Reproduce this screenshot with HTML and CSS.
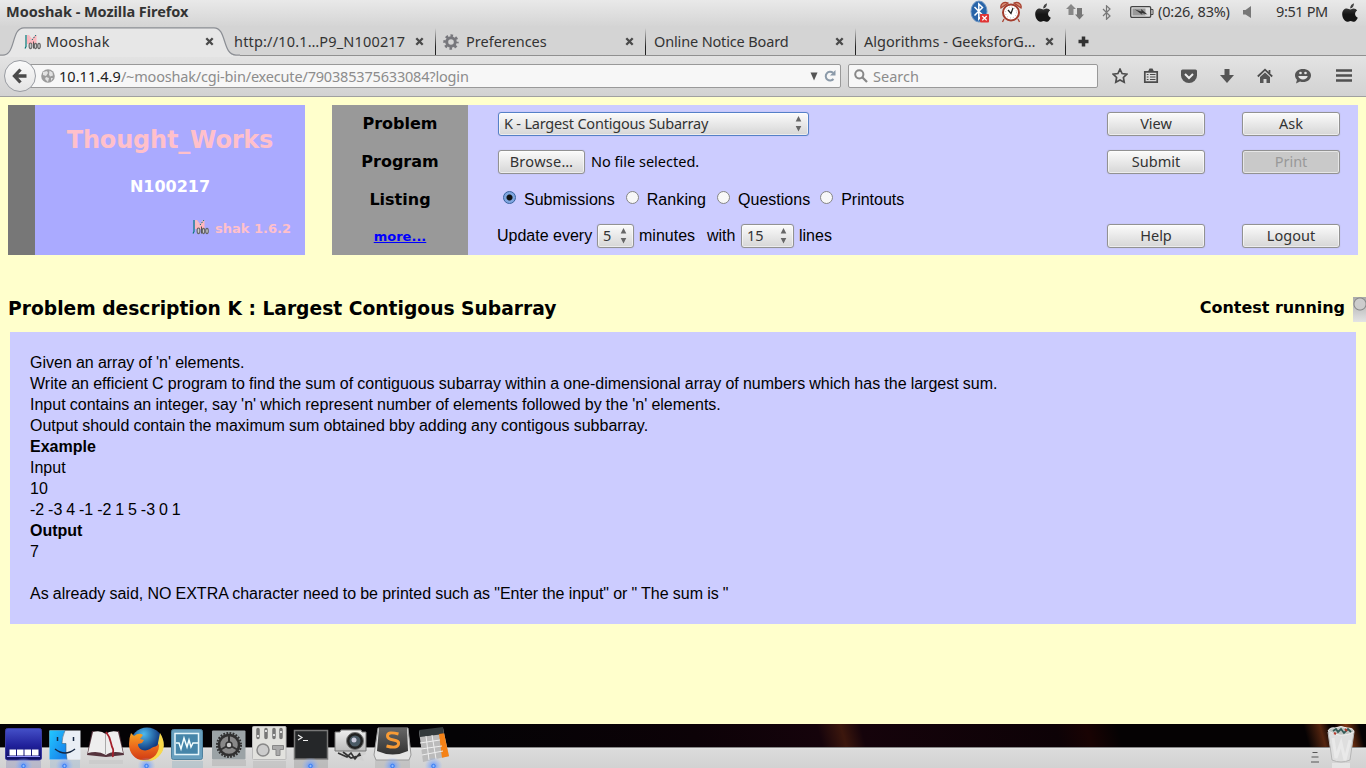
FILE: index.html
```html
<!DOCTYPE html>
<html lang="en">
<head>
<meta charset="utf-8">
<title>Mooshak</title>
<link rel="stylesheet" href="styles.css">
</head>
<body>
<svg class="defs" width="0" height="0">
  <defs>
    <linearGradient id="apple-fill" x2="0" y2="1"><stop stop-color="#555"/><stop offset=".6" stop-color="#151515"/></linearGradient>
    <linearGradient id="glass" x2="0" y2="1"><stop stop-color="#666"/><stop offset="1" stop-color="#333"/></linearGradient>
    <linearGradient id="silver" x2="0" y2="1"><stop stop-color="#eee"/><stop offset="1" stop-color="#bbb"/></linearGradient>
    <linearGradient id="navy" x2="0" y2="1"><stop stop-color="#4450c8"/><stop offset=".55" stop-color="#20209a"/><stop offset="1" stop-color="#101060"/></linearGradient>
    <linearGradient id="sky" x2="1" y2="1"><stop stop-color="#22c8ff"/><stop offset="1" stop-color="#1677e8"/></linearGradient>
    <linearGradient id="fox" x2="0" y2="1"><stop stop-color="#f5a623"/><stop offset=".5" stop-color="#ec6a1c"/><stop offset="1" stop-color="#cf3a14"/></linearGradient>
    <radialGradient id="globe-fill" cx=".4" cy=".2"><stop stop-color="#4db9ee"/><stop offset="1" stop-color="#123a80"/></radialGradient>
    <radialGradient id="glow"><stop stop-color="#4d8dff"/><stop offset=".4" stop-color="#6f9fff" stop-opacity=".55"/><stop offset="1" stop-color="#8fb4ff" stop-opacity="0"/></radialGradient>
    <symbol id="apple" viewBox="0 0 16 19"><path d="M8.2 5.6C8 2.800 9.800.8 12 .2c.2 2.500-1.400 4.900-3.800 5.400zM11.500 5.500c1.700 0 3 .8 3.600 2-3 2-2.500 5.800.7 7.200-.9 2.300-2.400 4-3.800 4-1.300 0-1.800-.8-3.400-.8-1.500 0-2 .8-3.300.8C2.700 18.700.2 14.700.2 11.200c0-3.600 2.200-5.600 4.500-5.600 1.600 0 2.500.9 3.700.9 1.100 0 1.700-1 3.100-1z" fill="url(#apple-fill)"/></symbol>
    <symbol id="close" viewBox="0 0 9 9"><path d="M1.300 1.300l6.400 6.400M7.700 1.300L1.300 7.700" stroke="#4a4a4a" stroke-width="2.300"/></symbol>
    <symbol id="moo" viewBox="0 0 17 16"><path d="M3 1h2l3 4 3-4h1.500v9H3z" fill="#ffb6bd"/><path d="M2 1v11.500L1 14.500" stroke="#087878" fill="none" stroke-width="1.200"/><path d="M4 1.500l3.500 6" stroke="#e3c9cd" fill="none"/><path d="M8 6l4-5" stroke="#087878" stroke-dasharray="1.500 1"/><path d="M9.500 7.500v7" stroke="#555"/><g fill="#ccc" stroke="#666" stroke-width="1.100"><ellipse cx="6.500" cy="11.800" rx="1.400" ry="2.800"/><ellipse cx="11.500" cy="12" rx="1.200" ry="2.600"/><ellipse cx="15" cy="12" rx="1.300" ry="2.600"/></g></symbol>
    <symbol id="gear" viewBox="-8 -8 16 16"><g fill="none"><circle r="4.300" stroke="currentColor" stroke-width="3"/><circle r="6.400" stroke="currentColor" stroke-width="2.600" stroke-dasharray="2.600 2.427" stroke-dashoffset="1.300"/></g></symbol>
    <symbol id="updown" viewBox="0 0 7 17"><path d="M3.500 1L6.300 6.500H.7zM3.500 16.500L.7 11h5.600z" fill="#666"/></symbol>
    <symbol id="lit" viewBox="0 0 20 12"><circle cx="10" cy="8" r="9" fill="url(#glow)"/><circle cx="10" cy="8" r="1.700" fill="#8fbcff" stroke="#3679f0"/></symbol>
  </defs>
</svg>

<header class="titlebar">
  <div class="window-title">Mooshak - Mozilla Firefox</div>
  <div class="indicators">
    <svg class="i-bt" viewBox="0 0 20 24"><ellipse cx="9" cy="11.500" rx="8" ry="10.500" fill="#2864a8" stroke="#6b95c4"/><path d="M4.500 7l8 8-3.700 4V4l3.700 3.500-8 8" fill="none" stroke="#fff" stroke-width="1.500"/><rect x="10" y="14" width="9" height="8.500" rx="1" fill="#e03434"/><path d="M12.300 16l4.400 4.400m0-4.400l-4.400 4.400" stroke="#fff" stroke-width="1.300"/></svg>
    <svg class="i-alarm" viewBox="0 0 22 22"><path d="M1 7C0 3 4 0 8 2zM21 7c1-4-3-7-7-5zM4 18l-1.500 3M18 18l1.500 3" fill="#d99078" stroke="#a84332" stroke-width="1.300"/><circle cx="11" cy="11.500" r="8" fill="#fff" stroke="#a33c2c" stroke-width="2"/><circle cx="11" cy="11.500" r="5.500" fill="none" stroke="#999" stroke-dasharray=".7 2.180"/><path d="M8 9l3 3.500L13 7" fill="none" stroke="#222" stroke-width="1.300"/></svg>
    <svg class="i-apple"><use href="#apple"/></svg>
    <svg class="i-net" viewBox="0 0 18 16"><path d="M5 0l5 5H7.500v6h-5V5H0z" fill="#888"/><path d="M13.500 15.500l4.500-5h-2V4h-5v6.500H9z" fill="#777"/></svg>
    <svg class="i-bt2" viewBox="0 0 9 15"><path d="M1 4l7 7-3.500 3.300V.8L8 4l-7 7" fill="none" stroke="#777" stroke-width="1.200"/></svg>
    <svg class="i-bat" viewBox="0 0 24 12"><rect x=".7" y=".7" width="20" height="10.600" rx="1.300" fill="none" stroke="#444" stroke-width="1.300"/><path d="M21 3.500h2v5h-2" fill="none" stroke="#444"/><path d="M2.500 2.500h13v7h-13z" fill="#999"/><path d="M5 3.500l6.500 2L11 3l6.500 5.500-6-1.500 1 2z" fill="#333"/></svg>
    <span class="battery-text">(0:26, 83%)</span>
    <svg class="i-vol" viewBox="0 0 9 12"><path d="M0 4h2.500L8 0v12L2.500 8.500H0z" fill="#777"/></svg>
    <span class="clock">9:51 PM</span>
    <svg class="i-apple last"><use href="#apple"/></svg>
  </div>
</header>

<nav class="tabs">
  <svg class="tab-shape" viewBox="0 0 240 30"><path d="M0 28.500H3C16 28.500 11 1 24 1H214C227 1 222 28.500 236 28.500H240V30H0z" fill="#e7e7e7"/><path d="M0 28H3C16 28 11 .8 24 .8H214C227 .8 222 28 236 28H240" fill="none" stroke="#8b8e94" stroke-width="1.200"/></svg>
  <div class="tab active"><svg class="fav"><use href="#moo"/></svg><span class="t1">Mooshak</span><svg class="x"><use href="#close"/></svg></div>
  <div class="tab"><span class="t2">http://10.1…P9_N100217</span><svg class="x"><use href="#close"/></svg></div>
  <div class="tab"><svg class="fav gear"><use href="#gear"/></svg><span class="t3">Preferences</span><svg class="x"><use href="#close"/></svg></div>
  <div class="tab"><span class="t4">Online Notice Board</span><svg class="x"><use href="#close"/></svg></div>
  <div class="tab"><span class="t5">Algorithms - GeeksforG…</span><svg class="x"><use href="#close"/></svg></div>
  <svg class="plus" viewBox="0 0 11 11"><path d="M5.500.5v10M.5 5.500h10" stroke="#333" stroke-width="3.500"/></svg>
</nav>

<div class="toolbar">
  <div class="back"><svg viewBox="0 0 16 16" width="16" height="16"><path d="M8.500 1.500L2.500 8l6 6.500M3 8h11.500" fill="none" stroke="#4a4a4a" stroke-width="3.300"/></svg></div>
  <div class="url">
    <svg class="world" viewBox="0 0 14 14"><circle cx="7" cy="7" r="6.800" fill="#9b9b9b"/><path d="M2 3l4-1 1 2-2 3-3-1zM8.500 1.500l3 2 .5 3-3 1-1-2zM5 8l3 1-1 4-3-3zM10 9l2 0-2 3z" fill="#e2e2e2"/></svg>
    <span class="address"><b>10.11.4.9</b>/~mooshak/cgi-bin/execute/790385375633084?login</span>
    <svg class="drop" viewBox="0 0 8 9"><path d="M.5.5h7L4 8.500z" fill="#555"/></svg>
    <svg class="reload" viewBox="0 0 12 12"><path d="M9.500 9A4.400 4.400 0 1 1 9 2.800" fill="none" stroke="#8b9aa9" stroke-width="2"/><path d="M11.500 0v5.500H6z" fill="#8b9aa9"/></svg>
  </div>
  <div class="search"><svg viewBox="0 0 14 14" width="14" height="14"><circle cx="5.300" cy="5.300" r="4.100" fill="none" stroke="#888" stroke-width="2"/><path d="M8.500 8.500l4.500 4.500" stroke="#888" stroke-width="2.300"/></svg><span>Search</span></div>
  <div class="tools">
    <svg viewBox="0 0 16 16"><path d="M8 1.200l2.100 4.300 4.700.7-3.400 3.300.8 4.700L8 12l-4.200 2.200.8-4.700L1.200 6.200l4.700-.7z" fill="none" stroke="#4c4c4c" stroke-width="1.700"/></svg>
    <i class="thin"></i>
    <svg class="clip" viewBox="0 0 16 16"><path d="M1.800 3.800h12.400v10.400H1.800z" fill="none" stroke="#4c4c4c" stroke-width="1.700"/><path d="M5 3.500l1.500-3h3l1.500 3z" fill="#4c4c4c"/><path d="M3.800 6.500h1.700m1.500 0h5.500M3.800 9h1.700M7 9h5.500M3.800 11.500h1.700m1.500 0h5.500" stroke="#4c4c4c" stroke-width="1.200"/></svg>
    <svg viewBox="0 0 16 16"><path d="M0 3Q0 1.500 1.500 1.500h13Q16 1.500 16 3v4.500a8 7.500 0 0 1-16 0z" fill="#555"/><path d="M4 6l4 4 4-4" fill="none" stroke="#eee" stroke-width="2"/></svg>
    <svg viewBox="0 0 16 16"><path d="M5.500 1h5v6H15l-7 8-7-8h4.500z" fill="#555"/></svg>
    <svg viewBox="0 0 16 16"><path d="M.8 8.500L8 1.700l7.200 6.800M12.500 2v3" fill="none" stroke="#4c4c4c" stroke-width="1.800"/><path d="M3 9l5-4.500L13 9v6H9.500v-4h-3v4H3z" fill="#555"/></svg>
    <svg viewBox="0 0 16 16"><path d="M8 1c4.500 0 8 2.700 8 6.400s-3.500 6.600-8 6.600q-1.500 0-3-.5L1 15.500l1-3.700C1 10.700 0 9.300 0 7.400 0 3.700 3.500 1 8 1z" fill="#555"/><path d="M3.300 8h9.400c-.5 4.500-8.900 4.500-9.400 0z" fill="#e5e5e5"/><circle cx="5.500" cy="5" r="1.300" fill="#e5e5e5"/><circle cx="10.500" cy="5" r="1.300" fill="#e5e5e5"/></svg>
    <i class="tall"></i>
    <svg viewBox="0 0 16 16"><path d="M0 2.500h16M0 7.500h16M0 12.500h16" stroke="#505050" stroke-width="2.600"/></svg>
  </div>
</div>

<main class="page">
  <section class="top">
    <div class="team">
      <h1>Thought_Works</h1>
      <h2>N100217</h2>
      <div class="brand"><svg><use href="#moo"/></svg>shak 1.6.2</div>
    </div>
    <div class="labels"><span>Problem</span><span>Program</span><span>Listing</span><a href="#">more...</a></div>
    <div class="form">
      <div class="row"><div class="controls"><div class="btn select wide"><span>K - Largest Contigous Subarray</span><svg><use href="#updown"/></svg></div></div><div class="btn action">View</div><div class="btn action">Ask</div></div>
      <div class="row"><div class="controls"><div class="btn browse">Browse…</div><span class="nofile">No file selected.</span></div><div class="btn action">Submit</div><div class="btn action disabled">Print</div></div>
      <div class="row radios"><i class="radio on"></i><span class="r1">Submissions</span><i class="radio"></i><span class="r2">Ranking</span><i class="radio"></i><span class="r3">Questions</span><i class="radio"></i><span>Printouts</span></div>
      <div class="row"><div class="controls update"><span class="u1">Update every</span><div class="btn select s5"><span>5</span><svg><use href="#updown"/></svg></div><span class="u2">minutes</span><span class="u3">with</span><div class="btn select s15"><span>15</span><svg><use href="#updown"/></svg></div><span>lines</span></div><div class="btn action">Help</div><div class="btn action">Logout</div></div>
    </div>
  </section>
  <section class="heading"><h3>Problem description K : Largest Contigous Subarray</h3><div class="status">Contest running</div><i class="scroll"></i></section>
  <article class="problem">Given an array of 'n' elements.<br>Write an efficient C program to find the sum of contiguous subarray within a one-dimensional array of numbers which has the largest sum.<br>Input contains an integer, say 'n' which represent number of elements followed by the 'n' elements.<br>Output should contain the maximum sum obtained bby adding any contigous subbarray.<br><b>Example</b><br>Input<br>10<br><span class="sample">-2 -3 4 -1 -2 1 5 -3 0 1</span><br><b>Output</b><br>7<br><br>As already said, NO EXTRA character need to be printed such as "Enter the input" or " The sum is "</article>
</main>

<footer class="dock">
  <svg viewBox="0 0 41 44"><path d="M3 37h35v7H3z" fill="#8888b8" opacity=".35"/><rect x="2.500" y="4.500" width="36" height="31.500" rx="2" fill="url(#navy)" stroke="#3b3b9e"/><path d="M6.500 25.500h6.500v6H6.500zm7.500 0h6.500v6H14zm7.500 0H28v6h-6.500zm7.500 0h6.500v6H29z" fill="#fff"/><path d="M4 32.500h33" stroke="#99f"/><use href="#lit" x="10.500" y="34" width="20" height="12"/></svg>
  <svg viewBox="0 0 41 44"><path d="M6 36h30v8H6z" fill="#9dbbd5" opacity=".4"/><path d="M5.500 6.500h31v29h-31z" fill="#e9eef5"/><path d="M5.500 6.500H21q-3.500 7-3 13h4q-.5 9 1 16H5.500z" fill="url(#sky)"/><path d="M21 6.500q-3 7-3 13h4q-.5 9 1 16" fill="none" stroke="#38617e" stroke-width=".6"/><path d="M13.500 13v4M29.500 13v4M11 25q10 8 20 0" fill="none" stroke="#152640" stroke-width="1.500"/><use href="#lit" x="10.500" y="34" width="20" height="12"/></svg>
  <svg viewBox="0 0 41 44"><path d="M2 31L7 7l13 2 14-2 5 24-18 2z" fill="#55343d"/><path d="M3 29L8 8q8-2 12.500 2Q26 6 33 8l5 21q-11-3-17 2-8-5-18-2z" fill="#eee"/><path d="M20.500 10v20" stroke="#aaa"/><path d="M21 8c6 7 4 12 7 17 1 3-1 5 0 8" fill="none" stroke="#a5202b" stroke-width="1.800"/><path d="M4 36h34v4H4z" fill="#bbb" opacity=".3"/></svg>
  <svg viewBox="0 0 41 44"><circle cx="21" cy="20" r="16.500" fill="url(#globe-fill)"/><path d="M34 9c5 8 6 17-2 24-5 5-14 6-20 2 12 1 20-6 20-16z" fill="#f9d94a"/><path d="M5 9l3 3q5-4 9-1l-3 4 4 1-2 3-4 1c0 6 7 8 12 5 4-3 8-2 9-6 1 9-5 17-14 17C10 37 3 30 3 20q0-6 2-11z" fill="url(#fox)"/><use href="#lit" x="10.500" y="34" width="20" height="12"/></svg>
  <svg viewBox="0 0 41 44"><path d="M5 37h31v7H5z" fill="#80a8bd" opacity=".3"/><rect x="4.500" y="5.500" width="31" height="30" rx="2" fill="#689fbe" stroke="#4e819e"/><path d="M8 9.500h23.500v21H8z" fill="#4585a9" stroke="#e5f5fa" stroke-width="1.500"/><path d="M9 19h3l2 6 3-11 3 9 2-7 2 7 2-4h5" fill="none" stroke="#f4ffff" stroke-width="1.500"/></svg>
  <svg viewBox="0 0 41 44"><path d="M4 36h34v6H4z" fill="#999" opacity=".3"/><rect x="4" y="6.500" width="33.500" height="29" rx="1" fill="#9ba3a6"/><circle cx="21" cy="21" r="10" fill="#888" stroke="#303030" stroke-width="2.500"/><circle cx="21" cy="21" r="12" fill="none" stroke="#303030" stroke-width="2" stroke-dasharray="1.800 1.350"/><path d="M21 21V11M21 21l9 5M21 21l-9 5" stroke="#333" stroke-width="2"/><circle cx="21" cy="21" r="3" fill="#ccc" stroke="#333" stroke-width="1.500"/></svg>
  <svg viewBox="0 0 41 44"><path d="M4 37h33v7H4z" fill="#aaa" opacity=".3"/><rect x="3.500" y="2.500" width="33.500" height="33" rx="1" fill="#e2e2de" stroke="#bbb"/><path d="M9 5.500v8M17 5.500v8M25 5.500v8M32 5.500v8" stroke="#777" stroke-width="3.500" stroke-linecap="round"/><path d="M9 11v2M17 6v2M25 10v2M32 7v2" stroke="#ddd" stroke-width="2"/><circle cx="14" cy="26" r="6" fill="#ccc" stroke="#888" stroke-width="1.500"/><path d="M23.500 21.500h11v4h-3.500v6h-4v-6h-3.500z" fill="#aaa" stroke="#888"/></svg>
  <svg viewBox="0 0 41 44"><path d="M4 36h34v8H4z" fill="#999" opacity=".4"/><rect x="4.500" y="6.500" width="33" height="28.500" fill="#252729" stroke="#777" stroke-width="1.500"/><path d="M8 11l4 2.500L8 16M13 16.500h5" fill="none" stroke="#eee" stroke-width="1.200"/><use href="#lit" x="10.500" y="34" width="20" height="12"/></svg>
  <svg viewBox="0 0 41 44"><path d="M5 26h28l2 4-4 2 2 5-9-2-4 2-5-3-6 2 2-4z" fill="#d0d0d0"/><path d="M7 29l9 4 4-4 4 6 5-6M12 28l8 6 10-3" fill="none" stroke="#333" stroke-width="1.600"/><path d="M4 8h5l1-2h20l1 2h4v19H4z" fill="url(#silver)" stroke="#777"/><circle cx="24" cy="17" r="8.500" fill="#222" stroke="#777"/><circle cx="24" cy="17" r="5.500" fill="#4a5a65"/><circle cx="23" cy="16" r="2.500" fill="#ccd"/></svg>
  <svg viewBox="0 0 41 44"><path d="M3 36h35v8H3z" fill="#aaa" opacity=".4"/><path d="M6 4h30l3 27-2 5H4l-2-5z" fill="#e5e5e5" stroke="#999"/><path d="M7 4h28l1 23q-15 7-31 0z" fill="url(#glass)"/><path d="M26.500 10q-11-3-11 2 0 3 6 4t5 4q-1 5-12 2" fill="none" stroke="#f89b35" stroke-width="3"/><use href="#lit" x="10.500" y="34" width="20" height="12"/></svg>
  <svg viewBox="0 0 41 44"><path d="M6 7l24-3 6 28-26 6z" fill="#bbb"/><path d="M6 6l24-3 1 7-24 3z" fill="#333a3c"/><path d="M26 10l5-.7 5 23-7 1.500z" fill="#f58216"/><path d="M7 19l20-3M8 25l21-3M9 31l21-4M13 12l3 24M19 11l4 24" stroke="#eee" stroke-width="1"/><use href="#lit" x="10.500" y="34" width="20" height="12"/></svg>
  <svg class="dock-menu" viewBox="0 0 8 12"><path d="M1.500 1.500h5M.5 6h7M0 11h8" stroke="#555"/></svg>
  <svg class="trash" viewBox="0 0 41 44"><path d="M11 39h18v5H11z" fill="#fff" opacity=".4"/><path d="M7 8h26l-4 28q-9 4-18 0z" fill="#dedede" stroke="#b5b5b5"/><path d="M12 14l3 20 5-15 4 17 5-20" fill="none" stroke="#e9e9e9" stroke-width="3"/><path d="M7 7q2-4 7-3 6-3 12 0 7 0 7 4-13 7-26-1z" fill="#c3c6c3" stroke="#eee"/><path d="M12 7l3-2 2 3 3-3 3 4 4-4 3 3" fill="none" stroke="#345b58" stroke-width="1.800"/><path d="M24 5l2 2M13 9l2 1" stroke="#b43b2c" stroke-width="2"/></svg>
</footer>
</body>
</html>
```
FILE: styles.css
```css
* { box-sizing: border-box; }
body { margin: 0; width: 1366px; height: 768px; overflow: hidden; display: flex; flex-direction: column; background: #ffffcc; font: 16px "Liberation Sans", sans-serif; color: #000; }
svg { display: block; flex: none; }
.defs { position: absolute; }
.titlebar, .tabs, .toolbar, .btn, .nofile { font-family: "Noto Sans", sans-serif; font-size: 14.500px; color: #333; white-space: nowrap; }

.titlebar { height: 26px; display: flex; justify-content: space-between; align-items: center; background: linear-gradient(#e9e9e9, #d5d5d5); padding-bottom: 2px; }
.window-title { padding: 0 0 2px 6px; font-size: 14.500px; font-weight: bold; letter-spacing: -.04px; }
.indicators { display: flex; align-items: center; width: 396px; }
.i-bt { width: 20px; height: 24px; }
.i-alarm { width: 22px; height: 22px; margin-left: 10px; }
.i-apple { width: 16px; height: 19px; margin-left: 13px; }
.i-net { width: 18px; height: 16px; margin-left: 15px; }
.i-bt2 { width: 9px; height: 15px; margin-left: 18px; }
.i-bat { width: 24px; height: 12px; margin-left: 19px; }
.battery-text { width: 86px; padding: 0 0 2px 4px; letter-spacing: -.18px; }
.i-vol { width: 9px; height: 12px; margin-left: 3px; }
.clock { width: 57px; margin-left: 24px; padding-bottom: 2px; letter-spacing: -.38px; }
.i-apple.last { margin-left: 9px; }

.tabs { position: relative; height: 30px; display: flex; align-items: center; padding-left: 16px; background: #d4d4d4; border-bottom: 1px solid #909090; }
.tab-shape { position: absolute; left: 0; top: 1px; width: 240px; height: 30px; }
.tab { position: relative; width: 210px; height: 29px; display: flex; align-items: center; padding: 2px 12px 0 8px; }
.tab span { padding-bottom: 2px; }
.tab::after { content: ""; position: absolute; right: 0; top: 2px; width: 1px; height: 27px; background: linear-gradient(transparent, #222 70%); }
.tab.active::after { display: none; }
.fav { width: 17px; height: 16px; margin-right: 5px; }
.gear { width: 16px; color: #77777c; margin-left: -1px; margin-right: 7px; }
.x { width: 9px; height: 9px; margin-left: auto; }
.t1 { letter-spacing: .15px; }
.t2 { letter-spacing: .17px; }
.t4 { letter-spacing: -.15px; }
.t5 { letter-spacing: .03px; }
.plus { width: 11px; height: 11px; margin: 1px 0 0 12px; }

.toolbar { height: 41px; display: flex; align-items: center; padding-left: 4px; background: linear-gradient(#e3e3e3, #d2d2d2); border-bottom: 1px solid #a0a0a0; }
.back { position: relative; z-index: 1; width: 32px; height: 32px; flex: none; border: 1px solid #999ca2; border-radius: 50%; background: linear-gradient(#fafafa, #e4e4e4); display: flex; align-items: center; justify-content: center; }
.url, .search { height: 24px; border: 1px solid #999; border-radius: 2px; background: #f7f7f7; display: flex; align-items: center; color: #8c8c8c; }
.url { width: 812px; margin-left: -7px; padding: 0 4px 0 11px; }
.world { width: 14px; height: 14px; margin-right: 4px; }
.address { letter-spacing: -.18px; }
.address b { font-weight: normal; color: #222; letter-spacing: .05px; }
.drop { width: 8px; height: 9px; margin-left: auto; }
.reload { width: 12px; height: 12px; margin-left: 6px; }
.search { width: 250px; margin-left: 7px; padding-left: 5px; gap: 5px; }
.tools { width: 254px; margin-left: 14px; display: flex; align-items: center; }
.tools svg { width: 16px; height: 16px; margin-right: 22px; }
.tools svg:first-child { margin-right: 7px; }
.tools i { width: 1px; background: #b1b4b8; }
.thin { height: 18px; }
.tall { height: 32px; margin: 0 13px 0 -10px; }
.tools svg.clip { margin-left: 8px; }

.page { height: 627px; padding-top: 8px; }
.top { display: flex; height: 150px; padding: 0 8px; }
.team { width: 297px; border-left: 27px solid #777; background: #aaaaff; color: #ffc0cb; text-align: center; font-family: "DejaVu Sans", sans-serif; font-weight: bold; }
.team h1 { margin: 21px 0 0; font-size: 24px; line-height: 28px; letter-spacing: -.2px; }
.team h2 { margin: 23px 0 0; font-size: 16px; line-height: 19px; color: #fff; }
.brand { display: flex; align-items: center; justify-content: flex-end; margin-top: 23px; padding-right: 14px; font-size: 13px; line-height: 20px; }
.brand svg { width: 17px; height: 16px; margin: -4px 6px 0 0; }
.labels, .form { display: grid; grid-template-rows: 37px 39px 36px 37px; }
.labels { width: 136px; margin-left: 27px; background: #999; justify-items: center; align-items: center; font: bold 16px "DejaVu Sans", sans-serif; }
.labels a { color: #00f; font-size: 13px; padding-top: 2px; }
.form { width: 890px; background: #ccccff; padding-left: 29px; }
.row { display: flex; align-items: center; white-space: nowrap; }
.controls { width: 610px; padding-left: 1px; display: flex; align-items: center; }
.btn { height: 24px; border: 1px solid #929292; border-radius: 3px; background: linear-gradient(#fbfbfb, #d6d6d6); box-shadow: inset 0 0 0 1px #ffffff88, 0 0 1px #8888; display: flex; align-items: center; justify-content: center; padding-bottom: 2px; }
.action { width: 98px; margin-right: 37px; flex: none; }
.disabled { color: #999; background: #c9c9c9; }
.select { justify-content: space-between; padding: 0 6px 2px 5px; }
.select svg { width: 7px; height: 17px; margin-top: 2px; }
.wide { width: 311px; border-color: #5580c8; }
.wide span { letter-spacing: -.2px; }
.browse { width: 87px; letter-spacing: .3px; }
.nofile { margin-left: 6px; padding-bottom: 2px; color: #000; }
.radios { padding-left: 6px; padding-top: 1px; }
.radio { width: 13px; height: 13px; margin: -4px 8px 0 0; border: 1px solid #858585; border-radius: 50%; background: #f8f8f8; }
.radio.on { border-color: #36619d; background: radial-gradient(circle, #111 2.500px, #7fa6e0 3.500px); }
.r1 { margin-right: 11px; }
.r2 { margin-right: 11px; letter-spacing: .1px; }
.r3 { margin-right: 10px; }
.update { padding-left: 0; }
.u1 { width: 100px; }
.s5 { width: 37px; margin-right: 5px; }
.u2 { width: 68px; }
.u3 { width: 34px; }
.s15 { width: 53px; margin-right: 5px; }

.heading { height: 77px; padding: 30px 0 0 8px; display: flex; align-items: center; font-family: "DejaVu Sans", sans-serif; font-weight: bold; }
.heading h3 { margin: 0; font-size: 18.700px; }
.status { margin-left: auto; padding-bottom: 2px; font-size: 16px; letter-spacing: -.04px; }
.scroll { width: 13px; height: 25px; margin: 1px 0 0 8px; background: radial-gradient(circle at 7px 7px, #ccc 5px, #888 6px, transparent 7px), linear-gradient(#aaa, #e4e4e4); }
.problem { width: 1346px; height: 292px; margin-left: 10px; padding: 20px; background: #ccccff; line-height: 21px; white-space: nowrap; word-spacing: -.3px; }
.sample { word-spacing: -.55px; }

.dock { height: 44px; padding-left: 3px; display: flex; background: linear-gradient(transparent 23px, #888 23px, #888 24px, #e6e6e6 24px, #dbdbdb 26px, #d2d2d2), linear-gradient(75deg, #040305 0 450px, #0c0207 680px, #15030b 800px, #3c170d 823px, #15030b 842px, #0d0206 1030px, #190303 1060px, #050203 1090px 1270px, #55250f 1286px, #090303 1295px 1300px, #7a3512 1311px, #050203 1324px); }
.dock > svg { width: 41px; height: 44px; }
.dock .dock-menu { width: 8px; height: 12px; margin: 27px 0 0 auto; }
.dock .trash { margin: 0 4px 0 2px; }
```
